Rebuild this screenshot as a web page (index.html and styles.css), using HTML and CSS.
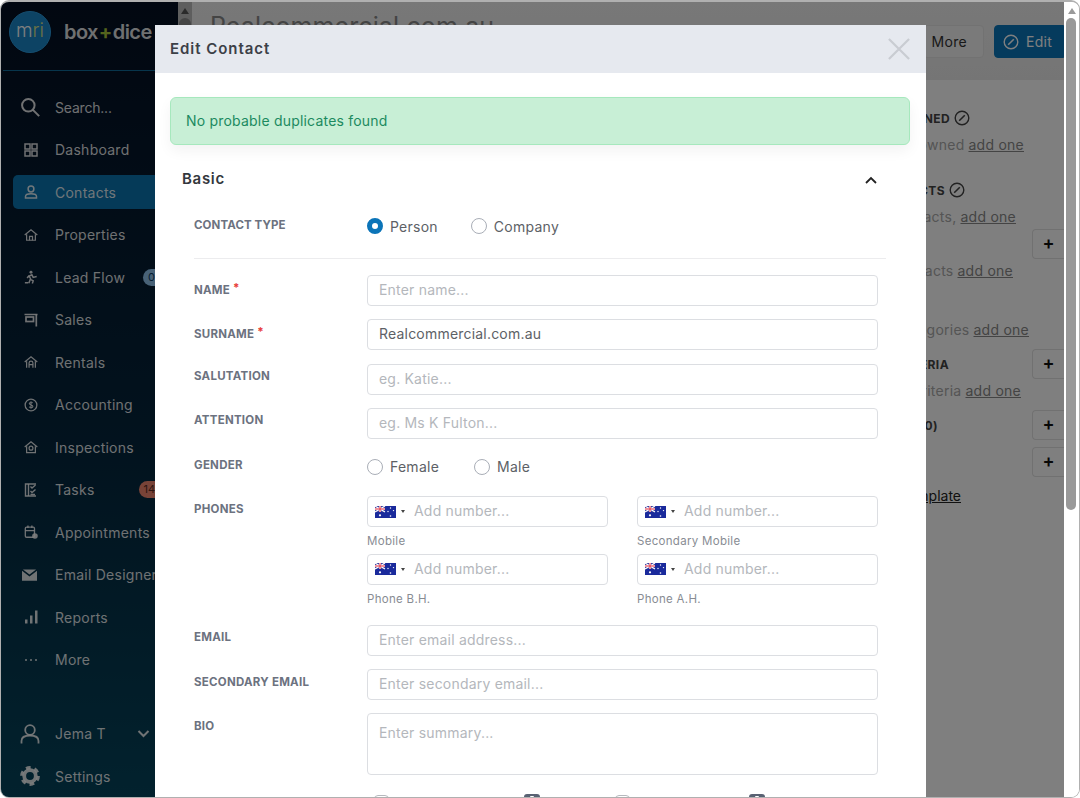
FILE: index.html
```html
<!DOCTYPE html>
<html>

<head>
<meta charset="utf-8">
<title>Edit Contact</title>
<link rel="stylesheet" href="styles.css">
</head>

<body>
<svg class="sprites" xmlns="http://www.w3.org/2000/svg">
    <defs>
        <symbol id="flag-au" viewBox="0 0 21 12">
            <rect width="21" height="12" fill="#1a2a9c"/>
            <rect width="10" height="6" fill="#3a3f9e"/>
            <path d="M0 0 L10 6 M10 0 L0 6" stroke="#fff" stroke-width="1.2"/>
            <path d="M5 0 V6 M0 3 H10" stroke="#fff" stroke-width="2"/>
            <path d="M5 0 V6 M0 3 H10" stroke="#e0273a" stroke-width="1"/>
            <circle cx="5" cy="9.3" r="1.1" fill="#fff"/>
            <circle cx="15.5" cy="2" r=".7" fill="#fff"/>
            <circle cx="18.5" cy="4.6" r=".7" fill="#fff"/>
            <circle cx="13" cy="5.5" r=".7" fill="#fff"/>
            <circle cx="15.5" cy="10" r=".8" fill="#fff"/>
        </symbol>
        <symbol id="edit-circle" viewBox="0 0 16 16">
            <circle cx="8" cy="8" r="6.8" fill="none" stroke="currentColor" stroke-width="1.4"/>
            <path d="M5.2 10.8 L10.8 5.2" stroke="currentColor" stroke-width="1.6" fill="none"/>
        </symbol>
    </defs>
</svg>

<div class="window">
    <div class="page">
        <aside class="sidebar">
            <div class="brand">
                <div class="brand-mark">m<span class="brand-r">r</span><span class="brand-i">i</span></div>
                <div class="brand-name">box<span class="brand-plus">+</span>dice</div>
            </div>
            <nav class="nav">
                <a class="nav-item">
                    <svg class="nav-icon nav-icon-big" viewBox="0 0 24 24" fill="none" stroke="currentColor" stroke-width="2.4"><circle cx="10" cy="10" r="7.5"/><path d="M15.5 15.5 L23 23"/></svg>
                    <span class="nav-label nav-label-search">Search...</span>
                </a>
                <a class="nav-item">
                    <svg class="nav-icon" viewBox="0 0 14 14" fill="none" stroke="currentColor" stroke-width="1.5"><rect x="1" y="1" width="5" height="5"/><rect x="8" y="1" width="5" height="5"/><rect x="1" y="8" width="5" height="5"/><rect x="8" y="8" width="5" height="5"/></svg>
                    <span class="nav-label">Dashboard</span>
                </a>
                <a class="nav-item nav-item-active">
                    <svg class="nav-icon" viewBox="0 0 14 14" fill="none" stroke="currentColor" stroke-width="1.5"><circle cx="7" cy="4" r="2.9"/><path d="M1.5 13 V11.5 C1.5 9.6 3.5 8.8 7 8.8 C10.5 8.8 12.500 9.6 12.500 11.500 V13 Z"/></svg>
                    <span class="nav-label">Contacts</span>
                </a>
                <a class="nav-item">
                    <svg class="nav-icon" viewBox="0 0 16 14" fill="none" stroke="currentColor" stroke-width="1.4"><path d="M0.8 7 L8 1 L15.200 7"/><path d="M3 6 V13 H13 V6"/><path d="M6.300 13 V8.500 H9.700 V13"/></svg>
                    <span class="nav-label">Properties</span>
                </a>
                <a class="nav-item">
                    <svg class="nav-icon" viewBox="0 0 16 16" fill="none" stroke="currentColor" stroke-width="1.7"><circle cx="8" cy="2.600" r="1.700" fill="currentColor" stroke="none"/><path d="M5.500 15 L7.500 10 L5.800 7 L9 5.500 L10.500 8.500 L14.500 7.500"/><path d="M6 6.500 L3.500 9 M8 11 L10.500 12.500 L9.500 15.500 M1 14.500 H5"/></svg>
                    <span class="nav-label">Lead Flow</span>
                    <span class="nav-badge nav-badge-blue">0</span>
                </a>
                <a class="nav-item">
                    <svg class="nav-icon" viewBox="0 0 14 14" fill="none" stroke="currentColor" stroke-width="1.7"><path d="M0.500 1.500 H13.500"/><path d="M12.300 1.500 V13.500"/><rect x="2" y="4" width="7.500" height="4.500"/></svg>
                    <span class="nav-label">Sales</span>
                </a>
                <a class="nav-item">
                    <svg class="nav-icon" viewBox="0 0 16 14" fill="none" stroke="currentColor" stroke-width="1.400"><path d="M0.800 7 L8 1 L15.200 7"/><path d="M3 6 V13.500 M13 6 V13.500"/><path d="M5.800 13.500 V8 C5.800 5.500 10.200 5.500 10.200 8 V13.500 M5.800 10 H10.200"/></svg>
                    <span class="nav-label">Rentals</span>
                </a>
                <a class="nav-item">
                    <svg class="nav-icon" viewBox="0 0 16 16" fill="none" stroke="currentColor"><circle cx="8" cy="8" r="6.700" stroke-width="1.500"/><path d="M10 5.800 C9.500 4.800 6 4.600 6 6.400 C6 8.300 10.200 7.500 10.200 9.600 C10.200 11.400 6.500 11.200 5.900 10.100 M8 3.800 V12.200" stroke-width="1.200"/></svg>
                    <span class="nav-label">Accounting</span>
                </a>
                <a class="nav-item">
                    <svg class="nav-icon" viewBox="0 0 16 14" fill="none" stroke="currentColor" stroke-width="1.400"><path d="M0.800 7 L8 1 L15.200 7"/><path d="M3 6 V13.500 H13 V6"/><circle cx="8" cy="8.300" r="2.200"/></svg>
                    <span class="nav-label">Inspections</span>
                </a>
                <a class="nav-item">
                    <svg class="nav-icon" viewBox="0 0 14 14" fill="none" stroke="currentColor" stroke-width="1.400"><path d="M12 13 H1.500 V1 H12"/><path d="M4.500 1 V13"/><path d="M6.500 3.500 L8 5 L11.500 2 M6.500 8 L8 9.500 L11.500 6.500 M6.500 11.500 H11"/></svg>
                    <span class="nav-label nav-label-tight">Tasks</span>
                    <span class="nav-badge nav-badge-red">14</span>
                </a>
                <a class="nav-item">
                    <svg class="nav-icon" viewBox="0 0 16 16" fill="none" stroke="currentColor" stroke-width="1.500"><rect x="1.500" y="2.500" width="10.500" height="11.500" rx="1.500"/><path d="M1.500 6.500 H12 M4.500 0.500 V3.500 M9 0.500 V3.500"/><circle cx="12.500" cy="12.500" r="3.200" fill="currentColor" stroke="none"/></svg>
                    <span class="nav-label">Appointments</span>
                </a>
                <a class="nav-item">
                    <svg class="nav-icon nav-icon-wide" viewBox="0 0 16 12"><path fill="currentColor" d="M1 0 H15 L8 5.500 Z M0 1.500 L8 7.500 L16 1.500 V12 H0 Z"/></svg>
                    <span class="nav-label">Email Designer</span>
                </a>
                <a class="nav-item">
                    <svg class="nav-icon" viewBox="0 0 14 14" fill="currentColor"><rect x="1" y="9.500" width="2.500" height="4"/><rect x="6" y="5.500" width="2.500" height="8"/><rect x="11" y="0.500" width="2.500" height="13"/></svg>
                    <span class="nav-label">Reports</span>
                </a>
                <a class="nav-item">
                    <svg class="nav-icon" viewBox="0 0 14 14" fill="currentColor"><circle cx="2" cy="7" r="1"/><circle cx="7" cy="7" r="1"/><circle cx="12" cy="7" r="1"/></svg>
                    <span class="nav-label">More</span>
                </a>
            </nav>
            <div class="nav nav-bottom">
                <a class="nav-item">
                    <svg class="nav-icon nav-icon-big" viewBox="0 0 20 20" fill="none" stroke="currentColor" stroke-width="1.800"><circle cx="10" cy="6" r="4.800"/><path d="M1.500 19.500 V17 C1.500 13.500 5 11.500 10 11.500 C15 11.500 18.500 13.500 18.500 17 V19.500"/></svg>
                    <span class="nav-label nav-label-grow">Jema T</span>
                    <svg class="nav-caret" viewBox="0 0 12 8" fill="none" stroke="currentColor" stroke-width="2"><path d="M1 1 L6 6 L11 1"/></svg>
                </a>
                <a class="nav-item">
                    <svg class="nav-icon nav-icon-big" viewBox="0 0 20 20" fill="none" stroke="currentColor"><circle cx="10" cy="10" r="5.800" stroke-width="3.800"/><circle cx="10" cy="10" r="8.300" stroke-width="3.200" stroke-dasharray="4.700 4"/></svg>
                    <span class="nav-label">Settings</span>
                </a>
            </div>
        </aside>

        <div class="inner-scroll">
            <div class="inner-arrow"></div>
            <div class="inner-thumb"></div>
        </div>

        <main class="main">
            <header class="main-head">
                <h1 class="main-title">Realcommercial.com.au</h1>
                <button class="btn btn-more">More</button>
                <button class="btn btn-primary"><svg class="btn-icon"><use href="#edit-circle"/></svg>Edit</button>
            </header>
            <section class="side">
                <div class="side-row side-title end-94">LISTINGS OWNED <svg class="side-edit"><use href="#edit-circle"/></svg></div>
                <div class="side-row side-text end-40 gap-s">No listings owned <u>add one</u></div>
                <div class="side-row side-title end-99 gap-l">RELATED CONTACTS <svg class="side-edit"><use href="#edit-circle"/></svg></div>
                <div class="side-row side-text end-48 gap-s">No related contacts, <u>add one</u></div>
                <div class="side-row gap-s"><span class="plus">+</span></div>
                <div class="side-row side-text end-51 gap-s">No referred contacts <u>add one</u></div>
                <div class="side-row side-text end-35 gap-xl">No selected categories <u>add one</u></div>
                <div class="side-row gap-m"><span class="side-title side-fill end-83">SEARCH CRITERIA</span><span class="plus">+</span></div>
                <div class="side-row side-text end-43 gap-s">No search criteria <u>add one</u></div>
                <div class="side-row gap-m"><span class="side-title side-fill end-94">DOCUMENTS (0)</span><span class="plus">+</span></div>
                <div class="side-row gap-l-s"><span class="plus">+</span></div>
                <div class="side-row side-link end-103 gap-m"><u>Use template</u></div>
            </section>
        </main>

        <div class="overlay"></div>

        <div class="modal">
            <div class="modal-head">
                <h2 class="modal-title">Edit Contact</h2>
                <svg class="modal-close" viewBox="0 0 24 24" fill="none" stroke="currentColor" stroke-width="2.400"><path d="M1 1 L23 23 M23 1 L1 23"/></svg>
            </div>
            <div class="modal-body">
                <div class="alert">No probable duplicates found</div>

                <div class="section-head">
                    <h3 class="section-title">Basic</h3>
                    <svg class="section-caret" viewBox="0 0 12 8" fill="none" stroke="currentColor" stroke-width="1.800"><path d="M1 7 L6 2 L11 7"/></svg>
                </div>

                <form class="form">
                    <div class="form-row form-row-type">
                        <label class="form-label form-label-mid">Contact type</label>
                        <div class="radios">
                            <label class="radio"><input type="radio" name="type" checked>Person</label>
                            <label class="radio"><input type="radio" name="type">Company</label>
                        </div>
                    </div>
                    <hr class="form-rule">

                    <div class="form-row">
                        <label class="form-label">Name <span class="req">*</span></label>
                        <input class="field" placeholder="Enter name...">
                    </div>
                    <div class="form-row">
                        <label class="form-label">Surname <span class="req">*</span></label>
                        <input class="field" value="Realcommercial.com.au">
                    </div>
                    <div class="form-row">
                        <label class="form-label">Salutation</label>
                        <input class="field" placeholder="eg. Katie...">
                    </div>
                    <div class="form-row">
                        <label class="form-label">Attention</label>
                        <input class="field" placeholder="eg. Ms K Fulton...">
                    </div>
                    <div class="form-row">
                        <label class="form-label">Gender</label>
                        <div class="radios radios-gender">
                            <label class="radio"><input type="radio" name="gender">Female</label>
                            <label class="radio"><input type="radio" name="gender">Male</label>
                        </div>
                    </div>
                    <div class="form-row">
                        <label class="form-label">Phones</label>
                        <div class="phones">
                            <div class="phone">
                                <div class="phone-box"><svg class="flag"><use href="#flag-au"/></svg><span class="phone-caret"></span><input class="phone-input" placeholder="Add number..."></div>
                                <div class="phone-name">Mobile</div>
                            </div>
                            <div class="phone">
                                <div class="phone-box"><svg class="flag"><use href="#flag-au"/></svg><span class="phone-caret"></span><input class="phone-input" placeholder="Add number..."></div>
                                <div class="phone-name">Secondary Mobile</div>
                            </div>
                            <div class="phone">
                                <div class="phone-box"><svg class="flag"><use href="#flag-au"/></svg><span class="phone-caret"></span><input class="phone-input" placeholder="Add number..."></div>
                                <div class="phone-name">Phone B.H.</div>
                            </div>
                            <div class="phone">
                                <div class="phone-box"><svg class="flag"><use href="#flag-au"/></svg><span class="phone-caret"></span><input class="phone-input" placeholder="Add number..."></div>
                                <div class="phone-name">Phone A.H.</div>
                            </div>
                        </div>
                    </div>
                    <div class="form-row">
                        <label class="form-label">Email</label>
                        <input class="field" placeholder="Enter email address...">
                    </div>
                    <div class="form-row">
                        <label class="form-label">Secondary email</label>
                        <input class="field" placeholder="Enter secondary email...">
                    </div>
                    <div class="form-row">
                        <label class="form-label">Bio</label>
                        <textarea class="field field-area" placeholder="Enter summary..."></textarea>
                    </div>
                    <div class="checks">
                        <div class="check"><span class="check-box"></span><span class="check-help"></span></div>
                        <div class="check check-short"><span class="check-box"></span><span class="check-help"></span></div>
                    </div>
                </form>
            </div>
        </div>
    </div>

    <div class="scrollbar">
        <div class="scroll-arrow"></div>
        <div class="scroll-thumb"></div>
    </div>
</div>
</body>

</html>
```

FILE: styles.css
```css
html, body {
    margin: 0;
    height: 100%;
    overflow: hidden;
    background: #fff;
}

body {
    font-family: "Inter", "Open Sans", sans-serif;
    font-size: 14px;
    color: #444;
}

.sprites {
    position: absolute;
    width: 0;
    height: 0;
}

.window {
    display: flex;
    height: 798px;
    box-sizing: border-box;
    border: 1px solid #b0b0b0;
    border-top-width: 2px;
    border-radius: 9px;
    overflow: hidden;
}

.page {
    position: relative;
    display: flex;
    flex: 1;
    min-width: 0;
    overflow: hidden;
}

/* sidebar */
.sidebar {
    display: flex;
    flex-direction: column;
    flex: none;
    width: 177px;
    background: linear-gradient(180deg, #040f22 0%, #04253c 55%, #04445c 100%);
    color: rgba(255, 255, 255, 0.88);
}

.brand {
    display: flex;
    align-items: center;
    gap: 13px;
    height: 69px;
    box-sizing: border-box;
    margin: 0 10px 0 2px;
    padding: 0 0 9px 6px;
    border-bottom: 1px solid #0e6a99;
}

.brand-mark {
    flex: none;
    width: 42px;
    height: 42px;
    box-sizing: border-box;
    border-radius: 50%;
    background: #1a86c8;
    border: 1px solid #2a9ade;
    color: #fff;
    font-size: 19px;
    font-weight: 300;
    line-height: 38px;
    text-align: center;
}

.brand-r,
.brand-i {
    color: #d9e48a;
}

.brand-name {
    font-size: 20px;
    font-weight: 600;
    letter-spacing: -0.6px;
    white-space: nowrap;
}

.brand-plus {
    color: #a8c63a;
    font-weight: 700;
    margin: 0 1px;
}

.nav {
    display: flex;
    flex-direction: column;
    margin-top: 19px;
    padding-left: 12px;
}

.nav-bottom {
    margin-top: auto;
    padding-bottom: 4px;
}

.nav-item {
    display: flex;
    align-items: center;
    flex: none;
    height: 34px;
    margin-bottom: 8.5px;
    padding-left: 9px;
    border-radius: 5px;
    white-space: nowrap;
    overflow: hidden;
}

.nav-bottom .nav-item:last-child {
    margin-bottom: 0;
}

.nav-item-active {
    background: #0a75b0;
}

.nav-icon {
    flex: none;
    width: 14px;
    height: 14px;
    margin: 0 17.5px 0 1.5px;
}

.nav-icon-big {
    width: 20px;
    height: 20px;
    margin: 0 15px 0 -2px;
}

.nav-icon-wide {
    width: 15px;
    height: 12px;
    margin: 0 18px 0 0;
}

.nav-label {
    font-size: 14px;
    letter-spacing: 0.25px;
}

.nav-label-search {
    letter-spacing: -0.2px;
}

.nav-label-grow {
    flex: 1;
}

.nav-label-tight {
    margin-right: 26px;
}

.nav-badge {
    margin-left: 18px;
    min-width: 24px;
    height: 17px;
    border-radius: 9px;
    font-size: 11px;
    line-height: 17px;
    padding-left: 5px;
    box-sizing: border-box;
}

.nav-badge-blue {
    background: #90c4ee;
    color: #0b3a63;
}

.nav-badge-red {
    background: #f08770;
    color: #5a2a20;
}

.nav-caret {
    flex: none;
    width: 13px;
    height: 8px;
    margin-right: 28px;
}

/* the page behind the modal */
.inner-scroll {
    flex: none;
    width: 14px;
    background: #bdbdbd;
}

.inner-arrow {
    width: 0;
    height: 0;
    margin: 6px auto 4px;
    border: 4px solid transparent;
    border-top: 0;
    border-bottom: 6px solid #555;
}

.inner-thumb {
    height: 400px;
    margin: 0 1px;
    border-radius: 6px;
    background: #8a8a8a;
}

.main {
    flex: 1;
    min-width: 0;
    display: flex;
    flex-direction: column;
    background: #fff;
}

.main-head {
    display: flex;
    align-items: flex-start;
    flex: none;
    height: 78px;
    padding-top: 23px;
    box-sizing: border-box;
    background: linear-gradient(180deg, #f0f0f0, #ebebeb);
}

.main-title {
    flex: 1;
    margin: -14px 0 0 18px;
    font-size: 25px;
    font-weight: 400;
    letter-spacing: 0.1px;
    color: #888;
    white-space: nowrap;
}

.btn {
    display: flex;
    align-items: center;
    height: 33px;
    margin-right: 10px;
    padding: 0 9px 0 8px;
    border: 1px solid #e4e4e4;
    border-radius: 4px;
    background: #f4f4f4;
    color: #333;
    font: 14px "Inter", sans-serif;
    letter-spacing: 0.3px;
}

.btn-more {
    padding-right: 16px;
}

.btn-primary {
    width: 70px;
    margin-right: 0;
    border-color: #0a77bb;
    border-radius: 4px 0 0 4px;
    background: #0a77bb;
    color: #fff;
}

.btn-icon {
    width: 16px;
    height: 16px;
    margin-right: 7px;
}

.side {
    flex: 1;
    display: flex;
    flex-direction: column;
    align-self: flex-end;
    width: 300px;
    padding-top: 28px;
    background: #fff;
    overflow: hidden;
}

.side-row {
    display: flex;
    align-items: center;
    justify-content: flex-end;
    height: 20px;
    white-space: nowrap;
}

.side-text {
    box-sizing: border-box;
    padding-bottom: 2px;
    color: #aaa;
    font-size: 14px;
    letter-spacing: 0.25px;
    gap: 4px;
}

.side-text u {
    color: #888;
}

.side-title {
    font-size: 12px;
    font-weight: 700;
    letter-spacing: 0.4px;
    color: #444;
    gap: 4px;
    display: flex;
    align-items: center;
    justify-content: flex-end;
}

.side-fill {
    flex: 1;
}

.side-edit {
    width: 16px;
    height: 16px;
}

.side-link {
    box-sizing: border-box;
    padding-bottom: 2px;
    font-size: 14px;
    color: #222;
}

.plus {
    flex: none;
    width: 32px;
    height: 30px;
    margin: -5px 0;
    box-sizing: border-box;
    border: 1px solid #e2e2e2;
    border-right: 0;
    border-radius: 4px 0 0 4px;
    font-size: 18px;
    font-weight: 600;
    line-height: 26px;
    text-align: center;
    color: #111;
}

.end-35 { padding-right: 35px; }
.end-40 { padding-right: 40px; }
.end-43 { padding-right: 43px; }
.end-48 { padding-right: 48px; }
.end-51 { padding-right: 51px; }
.end-83 { padding-right: 83px; }
.end-94 { padding-right: 94px; }
.end-99 { padding-right: 99px; }
.end-103 { padding-right: 103px; }

.gap-s { margin-top: 7px; }
.gap-m { margin-top: 14px; }
.gap-l-s { margin-top: 17px; }
.gap-l { margin-top: 25px; }
.gap-xl { margin-top: 39px; }

.overlay {
    position: absolute;
    inset: 0;
    background: rgba(0, 0, 0, 0.5);
}

/* modal */
.modal {
    position: absolute;
    top: 23px;
    left: 154px;
    bottom: 0;
    width: 771px;
    background: #fff;
    overflow: hidden;
}

.modal-head {
    display: flex;
    align-items: center;
    justify-content: space-between;
    height: 48px;
    padding: 0 16px 0 15px;
    background: #e6e9ef;
}

.modal-title {
    margin: -2px 0 0;
    font-size: 15px;
    font-weight: 600;
    letter-spacing: 0.95px;
    color: #3c4047;
}

.modal-close {
    width: 22px;
    height: 22px;
    color: #c9ccd2;
}

.modal-body {
    padding: 24px 16px 0 15px;
}

.alert {
    height: 48px;
    box-sizing: border-box;
    padding-left: 15px;
    border: 1px solid #a6e8bd;
    border-radius: 6px;
    background: #c8efd6;
    box-shadow: 0 6px 14px rgba(0, 0, 0, 0.05);
    color: #1c8a60;
    font-size: 14px;
    line-height: 46px;
    letter-spacing: 0.2px;
}

.section-head {
    display: flex;
    align-items: center;
    justify-content: space-between;
    height: 22px;
    margin-top: 22px;
    padding: 0 33px 0 12px;
}

.section-title {
    margin: 0;
    font-size: 15px;
    font-weight: 600;
    letter-spacing: 0.7px;
    color: #33373d;
}

.section-caret {
    width: 12px;
    height: 8px;
    color: #222;
    margin-top: 3px;
}

.form {
    margin: 0 24px;
}

.form-row {
    display: flex;
    align-items: flex-start;
    min-height: 31px;
    margin-bottom: 13.3px;
}

.form-row-type {
    align-items: center;
    min-height: 0;
    height: 22px;
    margin: 26px 0 0;
}

.form-label {
    flex: none;
    width: 173px;
    padding-top: 5.5px;
    font-size: 11.5px;
    font-weight: 700;
    line-height: 14px;
    letter-spacing: 0.25px;
    text-transform: uppercase;
    color: #6c7280;
    white-space: nowrap;
}

.form-label-mid {
    padding-top: 0;
    margin-top: -3px;
    letter-spacing: 0.1px;
}

.req {
    color: #e8413c;
    vertical-align: 2px;
}

.form-rule {
    height: 1px;
    margin: 21px 0 16px;
    border: 0;
    background: #ececee;
}

.field {
    flex: none;
    display: block;
    width: 511px;
    height: 31px;
    box-sizing: border-box;
    padding: 0 11px 2px;
    border: 1px solid #dcdee2;
    border-radius: 4px;
    outline: 0;
    background: #fff;
    color: #5d6166;
    font: 14px "Inter", sans-serif;
    letter-spacing: 0.2px;
}

.field::placeholder,
.phone-input::placeholder {
    color: #b4b7bc;
    opacity: 1;
}

.field-area {
    height: 62px;
    padding-top: 10px;
    resize: none;
}

.radios {
    display: flex;
    gap: 33px;
    height: 29px;
    align-items: center;
}

.radios-gender {
    gap: 35px;
}

.radio {
    display: flex;
    align-items: center;
    gap: 7px;
    color: #5d6166;
    font-size: 14px;
    letter-spacing: 0.25px;
}

.radio input {
    appearance: none;
    width: 16px;
    height: 16px;
    margin: 0;
    border: 1px solid #a9aeb7;
    border-radius: 50%;
    background: #fff;
}

.radio input:checked {
    border: 5px solid #0b74b8;
}

.phones {
    display: grid;
    grid-template-columns: 241px 241px;
    column-gap: 29px;
}

.phone {
    height: 57.5px;
}

.phone-box {
    display: flex;
    align-items: center;
    height: 31px;
    box-sizing: border-box;
    padding-left: 7px;
    border: 1px solid #dcdee2;
    border-radius: 4px;
}

.flag {
    flex: none;
    width: 21px;
    height: 12px;
}

.phone-caret {
    flex: none;
    width: 0;
    height: 0;
    margin: 0 9px 0 5px;
    border: 2px solid transparent;
    border-bottom: 0;
    border-top: 3px solid #444;
}

.phone-input {
    flex: 1;
    min-width: 0;
    border: 0;
    outline: 0;
    padding: 0 0 2px;
    font: 14px "Inter", sans-serif;
    letter-spacing: 0.2px;
}

.phone-name {
    margin-top: 7px;
    font-size: 11.5px;
    line-height: 14px;
    letter-spacing: 0.3px;
    color: #888c93;
}

.checks {
    display: flex;
    margin-left: 180px;
    gap: 75px;
}

.check {
    display: flex;
    width: 166px;
    justify-content: space-between;
}

.check-short {
    width: 150px;
}

.check-box {
    width: 15px;
    height: 15px;
    box-sizing: border-box;
    border: 1px solid #b5b8bd;
    border-radius: 4px;
    margin-top: 6px;
}

.check-help {
    width: 16px;
    height: 16px;
    border-radius: 3px;
    background: radial-gradient(circle at 50% 25%, #fff 2px, #596273 2.5px);
    margin-top: 5px;
}

/* window scrollbar */
.scrollbar {
    flex: none;
    width: 15px;
    background: #fff;
}

.scroll-arrow {
    width: 0;
    height: 0;
    margin: 6px auto 4px;
    border: 4px solid transparent;
    border-top: 0;
    border-bottom: 6px solid #9a9a9a;
}

.scroll-thumb {
    width: 10px;
    height: 492px;
    margin-left: 2px;
    border-radius: 6px;
    background: #999;
}
```
